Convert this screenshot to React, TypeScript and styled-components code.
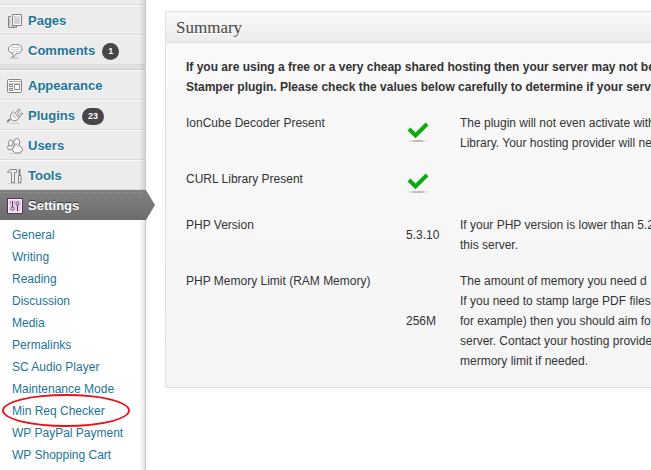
import React from "react";
import styled, { createGlobalStyle } from "styled-components";

const GlobalStyle = createGlobalStyle`
  * { box-sizing: border-box; }
  body {
    margin: 0;
    background: #fff;
    color: #333;
    font: 12px/20px "Liberation Sans", Arial, sans-serif;
  }
`;

const Page = styled.div`
  display: flex;
  min-height: 100vh;
  max-height: 100vh;
  overflow: hidden;
`;

const Sidebar = styled.nav`
  position: relative;
  flex: 0 0 146px;
  background: #ececec;
  border-right: 1px solid #c8c8c8;

  &::after {
    content: "";
    position: absolute;
    inset: 0 0 0 auto;
    width: 6px;
    background: linear-gradient(to right, rgba(0, 0, 0, 0), rgba(0, 0, 0, 0.1));
    pointer-events: none;
  }
`;

const Separator = styled.div`
  height: 5px;
  background: #dfdfdf;
  border-bottom: 1px solid #cfcfcf;
`;

const TopEdge = styled.div`
  height: 5px;
  border-bottom: 1px solid #dadada;
`;

const MenuLink = styled.a`
  display: flex;
  align-items: center;
  height: 30px;
  padding: 2px 0 0 7px;
  border-top: 1px solid #f9f9f9;
  border-bottom: 1px solid #dadada;
  color: #21759b;
  font-size: 13px;
  font-weight: bold;
  text-decoration: none;
  text-shadow: 0 1px 0 #fff;

  svg {
    flex: none;
    margin-right: 5px;
  }
`;

const CurrentLink = styled(MenuLink)`
  position: relative;
  z-index: 1;
  margin-right: -1px;
  border-top: 1px solid #808080;
  border-bottom: 1px solid #6d6d6d;
  background: linear-gradient(#808080, #6d6d6d);
  color: #fff;
  text-shadow: 0 -1px 0 #333;

  &::before {
    content: "";
    position: absolute;
    top: 1px;
    left: 0;
    right: 4px;
    border-top: 1px dotted #929292;
  }

  &::after {
    content: "";
    position: absolute;
    top: -1px;
    bottom: -1px;
    left: 100%;
    width: 9px;
    background: linear-gradient(#808080, #6d6d6d);
    clip-path: polygon(0 0, 100% 50%, 0 100%);
  }
`;

const Badge = styled.span`
  margin-left: 7px;
  padding: 0 6px;
  border-radius: 9px;
  background: #464646;
  color: #fff;
  font-size: 9px;
  line-height: 17px;
  text-shadow: none;
`;

const Submenu = styled.ul`
  margin: 0;
  padding: 4px 0;
  min-height: 100%;
  list-style: none;
  background: #fff;
`;

const SubItem = styled.li<{ $circled?: boolean }>`
  position: relative;
  padding-left: 12px;
  line-height: 22px;

  &::after {
    content: ${(p) => (p.$circled ? '""' : "none")};
    position: absolute;
    z-index: 1;
    inset: -6px 15px -5px 2px;
    border: 2px solid #f01018;
    border-radius: 50%;
    pointer-events: none;
  }
`;

const SubLink = styled.a`
  color: #21759b;
  text-decoration: none;
`;

const Main = styled.main`
  flex: 1;
  min-width: 0;
  padding: 11px 0 0 19px;
  overflow: hidden;
`;

const Panel = styled.section`
  border: 1px solid #dfdfdf;
  border-right: 0;
  border-radius: 3px 0 0 3px;
  background: linear-gradient(#f9f9f9, #f5f5f5);
  white-space: nowrap;
  overflow: hidden;
`;

const PanelTitle = styled.h3`
  margin: 0;
  padding: 2px 10px 0;
  border-bottom: 1px solid #dfdfdf;
  background: linear-gradient(#f9f9f9, #ececec);
  color: #464646;
  font: 17px/28px Georgia, "Liberation Serif", serif;
  text-shadow: 0 1px 0 #fff;
`;

const PanelBody = styled.div`
  padding: 14px 0 8px 20px;
`;

const Intro = styled.p`
  margin: 0 0 8px;
  font-weight: bold;
`;

const Checks = styled.table`
  width: 100%;
  table-layout: fixed;
  border-collapse: collapse;
`;

const Label = styled.th`
  width: 220px;
  padding: 8px 0;
  font-weight: normal;
  text-align: left;
  vertical-align: top;
`;

const Value = styled.td`
  width: 54px;
  padding: 8px 0;
  vertical-align: middle;

  svg {
    display: block;
  }
`;

const Description = styled.td`
  padding: 8px 0;
  vertical-align: middle;
`;

const iconProps = {
  width: 16,
  height: 16,
  viewBox: "0 0 16 16",
  fill: "none",
  stroke: "#858585",
  "aria-hidden": true,
} as const;

const PagesIcon = () => (
  <svg {...iconProps}>
    <path d="M4 3.5H1.5v11h8V13" fill="#e2e2e2" />
    <path d="M5.5 1.5h9v11h-9z" fill="#fafafa" />
    <path d="M7 4h3M7 6h6M7 8h6M7 10h6M11 4h2" stroke="#aaa" />
    <path d="M2.5 6v7M4 13.5h4" stroke="#bbb" />
  </svg>
);

const CommentsIcon = () => (
  <svg {...iconProps}>
    <ellipse cx="7" cy="15" rx="5" ry="1" fill="#ccc" stroke="none" />
    <path
      d="M8.5 1.5c4 0 6.500 1.800 6.500 4.500s-2.500 4.500-6 4.500c-.5 1.500-1.500 3-3.500 3.500.6-1 .8-2.300.5-3.700C3 10 1.500 8.500 1.500 6c0-2.700 3-4.500 7-4.500z"
      fill="#fff"
    />
    <path d="M4 4.500h9M3.500 6.500h10M5 8.500h7" stroke="#d4d4d4" />
  </svg>
);

const AppearanceIcon = () => (
  <svg {...iconProps}>
    <rect x=".5" y="1.500" width="14" height="13" rx="1" fill="#f8f8f8" />
    <path d="M2 3.500h12" stroke="#aaa" />
    <path d="M1 5.500h13" stroke="#ccc" />
    <path d="M7.500 6.500h5v5h-5zM2.500 6.500h3v2h-3zM2.500 10.500h3v2h-3z" fill="#fff" />
  </svg>
);

const PluginsIcon = () => (
  <svg {...iconProps}>
    <path d="M3 15.500h9" stroke="#ccc" />
    <path d="M1 14.500c-.5-1.500.5-2.500 2.500-3" strokeWidth="2" />
    <path d="M8.500 5l3.200-4 1.300 1-3 4.500M11 8l4-3.300.8 1.300-4 3.500" fill="#fff" />
    <path d="M6 3.500l6.500 6.500c-2 2.500-5 3.500-7 2.500l-2-2C3 8 4 5 6 3.500z" fill="#f5f5f5" />
    <path d="M5.500 6.500l4 4" stroke="#aaa" />
  </svg>
);

const UsersIcon = () => (
  <svg {...iconProps}>
    <path d="M2.500 15.500h12" stroke="#ccc" />
    <ellipse cx="3.500" cy="9.500" rx="3" ry="2.500" fill="#eee" />
    <ellipse cx="3.800" cy="5" rx="2.200" ry="3" fill="#fafafa" />
    <ellipse cx="10.500" cy="11.500" rx="5" ry="3.500" fill="#fafafa" />
    <ellipse cx="9.800" cy="4.500" rx="3" ry="4" fill="#fafafa" />
    <path d="M7.500 8.500h4.500" stroke="#f4f4f4" />
    <path d="M7.500 5.500c1.500 1 3.500 1 4.500 0" stroke="#aaa" />
  </svg>
);

const ToolsIcon = () => (
  <svg {...iconProps}>
    <path d="M1 15.500h14" stroke="#ccc" />
    <path d="M.5 4.500C1.500 2 3 1.500 5 1.500h4.500v3H7.500v10h-3v-10c-1.500-.6-2.500-.2-4 0z" fill="#f0f0f0" />
    <path d="M12.500 1v7" strokeWidth="2" />
    <path d="M11.500 7.500h2.500v7h-2.500z" fill="#eee" />
  </svg>
);

const SettingsIcon = () => (
  <svg {...iconProps} stroke="#5a3158">
    <rect x=".5" y=".5" width="15" height="15" fill="#e6d3e5" />
    <rect x="1.500" y="1.500" width="13" height="13" stroke="#f7eff7" />
    <path d="M5.500 3v6M10.500 7v6" />
    <path d="M3.500 3v3M7.500 3v2" stroke="#b08fae" />
    <circle cx="5.500" cy="10.500" r="1.500" fill="#fff" />
    <circle cx="10.500" cy="5.500" r="1.500" fill="#fff" />
  </svg>
);

const CheckMark = () => (
  <svg width="24" height="30" viewBox="0 0 24 30" role="img" aria-label="Yes">
    <path d="M3 11l6.500 6.500L21 6" fill="none" stroke="#0cab0c" strokeWidth="4" />
    <ellipse cx="12" cy="23" rx="10" ry="1" fill="#ddd" />
    <ellipse cx="12" cy="23" rx="6" ry="1" fill="#bbb" />
  </svg>
);

interface Entry {
  name: string;
  icon: React.ReactNode;
  count?: number;
}

const contentEntries: Entry[] = [
  { name: "Pages", icon: <PagesIcon /> },
  { name: "Comments", icon: <CommentsIcon />, count: 1 },
];

const adminEntries: Entry[] = [
  { name: "Appearance", icon: <AppearanceIcon /> },
  { name: "Plugins", icon: <PluginsIcon />, count: 23 },
  { name: "Users", icon: <UsersIcon /> },
  { name: "Tools", icon: <ToolsIcon /> },
];

const settingsPages = [
  "General",
  "Writing",
  "Reading",
  "Discussion",
  "Media",
  "Permalinks",
  "SC Audio Player",
  "Maintenance Mode",
  "Min Req Checker",
  "WP PayPal Payment",
  "WP Shopping Cart",
];

const checks: { label: string; value: React.ReactNode; lines: string[] }[] = [
  {
    label: "IonCube Decoder Present",
    value: <CheckMark />,
    lines: ["The plugin will not even activate with", "Library. Your hosting provider will ne"],
  },
  { label: "CURL Library Present", value: <CheckMark />, lines: [] },
  {
    label: "PHP Version",
    value: "5.3.10",
    lines: ["If your PHP version is lower than 5.2", "this server."],
  },
  {
    label: "PHP Memory Limit (RAM Memory)",
    value: "256M",
    lines: [
      "The amount of memory you need d",
      "If you need to stamp large PDF files",
      "for example) then you should aim fo",
      "server. Contact your hosting provide",
      "mermory limit if needed.",
    ],
  },
];

const Lines = ({ lines }: { lines: string[] }) => (
  <>
    {lines.map((line, i) => (
      <React.Fragment key={line}>
        {i > 0 && <br />}
        {line}
      </React.Fragment>
    ))}
  </>
);

const MenuEntries = ({ entries }: { entries: Entry[] }) => (
  <>
    {entries.map(({ name, icon, count }) => (
      <MenuLink key={name} href="#">
        {icon}
        {name}
        {count !== undefined && <Badge>{count}</Badge>}
      </MenuLink>
    ))}
  </>
);

export default function App() {
  return (
    <>
      <GlobalStyle />
      <Page>
        <Sidebar>
          <TopEdge />
          <MenuEntries entries={contentEntries} />
          <Separator />
          <MenuEntries entries={adminEntries} />
          <CurrentLink href="#" aria-current="page">
            <SettingsIcon />
            Settings
          </CurrentLink>
          <Submenu>
            {settingsPages.map((name) => (
              <SubItem key={name} $circled={name === "Min Req Checker"}>
                <SubLink href="#">{name}</SubLink>
              </SubItem>
            ))}
          </Submenu>
        </Sidebar>
        <Main>
          <Panel>
            <PanelTitle>Summary</PanelTitle>
            <PanelBody>
              <Intro>
                <Lines
                  lines={[
                    "If you are using a free or a very cheap shared hosting then your server may not be",
                    "Stamper plugin. Please check the values below carefully to determine if your serve",
                  ]}
                />
              </Intro>
              <Checks>
                <tbody>
                  {checks.map(({ label, value, lines }) => (
                    <tr key={label}>
                      <Label scope="row">{label}</Label>
                      <Value>{value}</Value>
                      <Description>
                        <Lines lines={lines} />
                      </Description>
                    </tr>
                  ))}
                </tbody>
              </Checks>
            </PanelBody>
          </Panel>
        </Main>
      </Page>
    </>
  );
}
